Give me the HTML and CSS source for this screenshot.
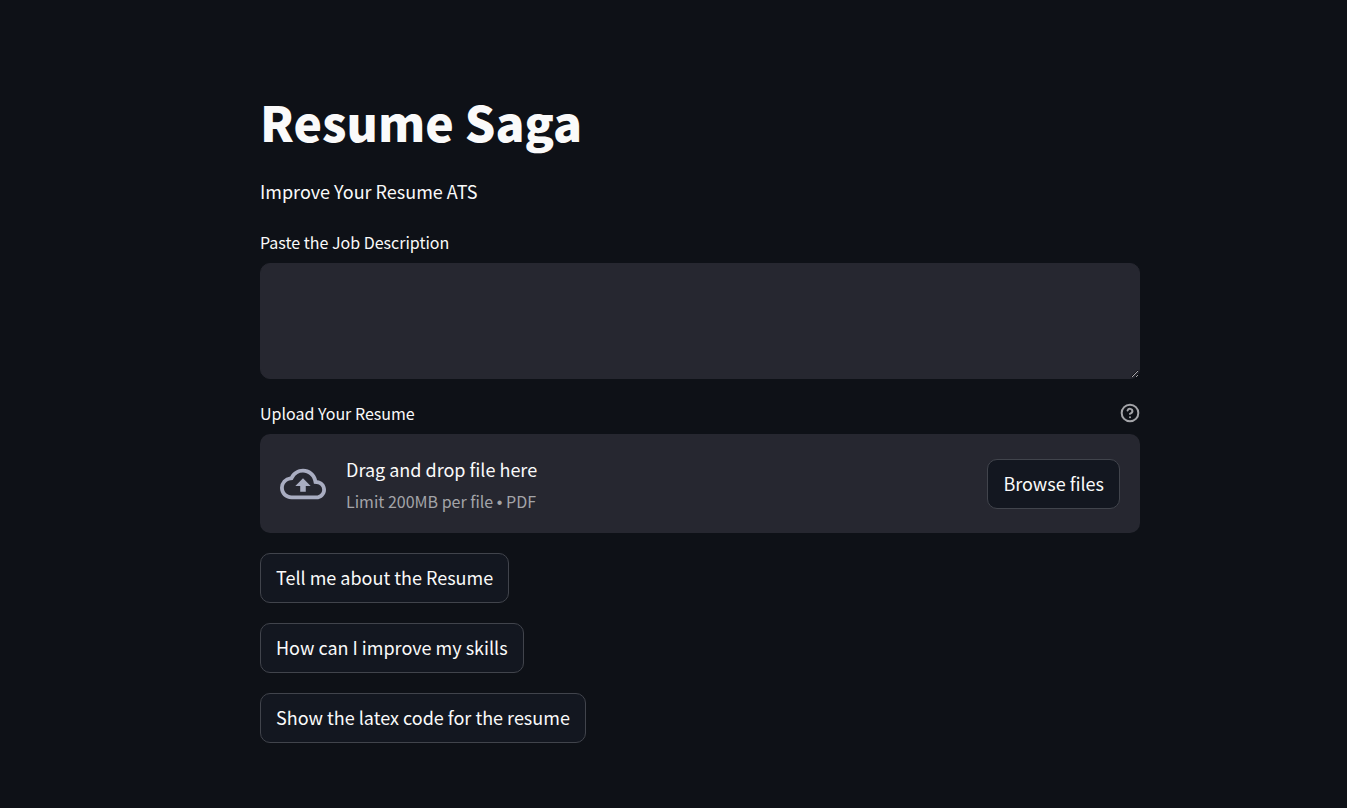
FILE: index.html
```html
<!DOCTYPE html>
<html lang="en">
  <head>
    <meta charset="utf-8" />
    <meta name="viewport" content="width=device-width, initial-scale=1.0" />
    <title>Resume Saga</title>
    <link rel="stylesheet" href="styles.css">
  </head>
  <body>
    <main class="container">
      <h1>Resume Saga</h1>
      <p class="subtitle">Improve Your Resume ATS</p>

      <div class="field">
        <label class="field-label" for="job_description">Paste the Job Description</label>
        <textarea id="job_description"></textarea>
      </div>

      <div class="field">
        <div class="label-row">
          <label class="field-label" for="resume_file">Upload Your Resume</label>
          <button type="button" class="help" aria-label="Help">
            <svg viewBox="0 0 24 24" fill="none" stroke="currentColor" stroke-width="2.4" stroke-linecap="round" stroke-linejoin="round">
              <circle cx="12" cy="12" r="10" />
              <path d="M9.09 9a3 3 0 0 1 5.83 1c0 2-3 3-3 3" />
              <path d="M12 17h.01" />
            </svg>
          </button>
        </div>
        <div class="dropzone">
          <svg class="cloud" viewBox="0 0 24 24" fill="currentColor">
            <path d="M19.35 10.04A7.49 7.49 0 0 0 12 4C9.11 4 6.6 5.64 5.35 8.04A5.994 5.994 0 0 0 0 14c0 3.31 2.69 6 6 6h13c2.76 0 5-2.24 5-5 0-2.64-2.05-4.78-4.65-4.96zM19 18H6c-2.21 0-4-1.79-4-4 0-2.05 1.53-3.76 3.56-3.97l1.07-.11.5-.95A5.469 5.469 0 0 1 12 6c2.62 0 4.88 1.86 5.39 4.43l.3 1.5 1.53.11A2.98 2.98 0 0 1 22 15c0 1.65-1.35 3-3 3zM8 13h2.55v3h2.9v-3H16l-4-4z" />
          </svg>
          <div class="dropzone-text">
            <span>Drag and drop file here</span>
            <small>Limit 200MB per file <span class="bullet">•</span> PDF</small>
          </div>
          <input id="resume_file" type="file" accept=".pdf" hidden />
          <button type="button" class="btn">Browse files</button>
        </div>
      </div>

      <button type="button" class="btn">Tell me about the Resume</button>
      <button type="button" class="btn">How can I improve my skills</button>
      <button type="button" class="btn">Show the latex code for the resume</button>
    </main>
  </body>
</html>
```
FILE: styles.css
```css
* {
  box-sizing: border-box;
}

body {
  margin: 0;
  padding: 88px 0 64px 53px;
  background-color: #0e1117;
  color: #fafafa;
  font-family: "Noto Sans CJK SC", "Noto Sans", sans-serif;
  font-size: 18px;
}

.container {
  display: flex;
  flex-direction: column;
  align-items: flex-start;
  gap: 20px;
  max-width: 880px;
  margin: 0 auto;
}

h1 {
  margin: 0;
  font-size: 48px;
  font-weight: 900;
  line-height: 66px;
}

.subtitle {
  margin: 0;
  line-height: 34px;
}

.field {
  width: 100%;
}

.label-row {
  display: flex;
  justify-content: space-between;
  align-items: center;
  margin-bottom: 7px;
}

.field-label {
  display: block;
  font-size: 16px;
  line-height: 28px;
}

.help {
  width: 20px;
  height: 20px;
  padding: 0;
  border: none;
  background: none;
  color: #a3a4a8;
}

.help svg {
  display: block;
}

textarea {
  display: block;
  width: 100%;
  height: 116px;
  margin-top: 7px;
  padding: 16px;
  border: 1px solid #262730;
  border-radius: 10px;
  background-color: #262730;
  color: inherit;
  font: inherit;
  resize: vertical;
  color-scheme: dark;
}

.dropzone {
  display: flex;
  align-items: center;
  gap: 20px;
  min-height: 99px;
  padding: 14px 20px;
  border-radius: 10px;
  background-color: #262730;
}

.cloud {
  width: 46px;
  height: 46px;
  color: #a9adc1;
}

.dropzone-text {
  display: flex;
  flex: 1;
  flex-direction: column;
  padding-top: 3px;
  line-height: 34px;
}

.dropzone-text small {
  color: #a3a4a8;
  font-size: 16px;
  line-height: 30px;
}

.bullet {
  font-family: "Liberation Sans", sans-serif;
}

.btn {
  height: 50px;
  padding: 0 15px 2px;
  border: 1px solid #41444c;
  border-radius: 10px;
  background-color: #131720;
  color: inherit;
  font: inherit;
  cursor: pointer;
}
```
